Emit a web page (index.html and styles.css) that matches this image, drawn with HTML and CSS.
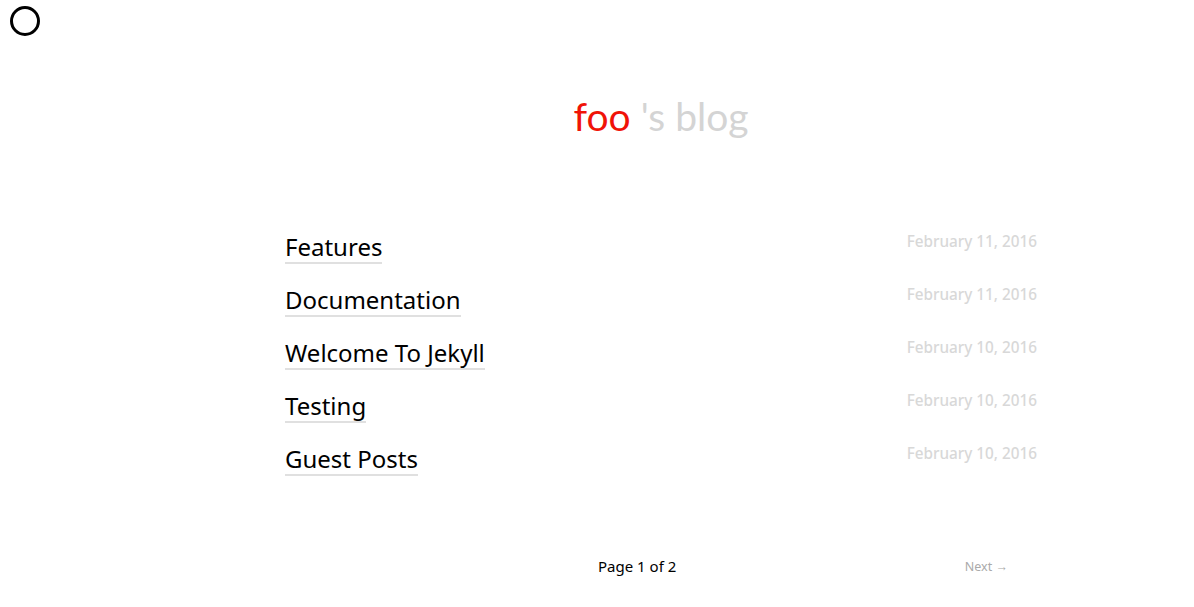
FILE: index.html
```html
<!DOCTYPE html>
<html lang="en">
<head>
  <meta charset="UTF-8">
  <meta name="viewport" content="width=device-width, initial-scale=1.0">
  <title>foo's blog</title>
  <link rel="stylesheet" href="styles.css">
</head>
<body>

  <header class="topbar">
    <a class="menu-toggle" href="#">
      <svg width="32" height="32" viewBox="0 0 32 32">
        <circle cx="16" cy="16" r="13.5" fill="none" stroke="#000" stroke-width="3"/>
      </svg>
    </a>
  </header>

  <main class="content">
    <h1 class="site-title"><span class="owner">foo</span> 's blog</h1>

    <ul class="post-list">
      <li class="post">
        <a class="post-link" href="#">Features</a>
        <span class="post-date">February 11, 2016</span>
      </li>
      <li class="post">
        <a class="post-link" href="#">Documentation</a>
        <span class="post-date">February 11, 2016</span>
      </li>
      <li class="post">
        <a class="post-link" href="#">Welcome To Jekyll</a>
        <span class="post-date">February 10, 2016</span>
      </li>
      <li class="post">
        <a class="post-link" href="#">Testing</a>
        <span class="post-date">February 10, 2016</span>
      </li>
      <li class="post">
        <a class="post-link" href="#">Guest Posts</a>
        <span class="post-date">February 10, 2016</span>
      </li>
    </ul>

    <nav class="pagination">
      <span class="page-number">Page 1 of 2</span>
      <a class="next" href="#">Next &rarr;</a>
    </nav>
  </main>

</body>
</html>
```

FILE: styles.css
```css
body {
  margin: 0;
  font-family: "Noto Sans", "Open Sans", sans-serif;
  background-color: #fff;
  color: #000;
}
a {
  text-decoration: none;
  color: inherit;
}
.topbar {
  height: 40px;
  padding: 5px 0 0 9px;
  box-sizing: border-box;
}
.menu-toggle {
  display: block;
  width: 32px;
  height: 32px;
}
.content {
  width: 752px;
  margin-left: 285px;
}
.site-title {
  margin: 52px 0 0;
  text-align: center;
  font-family: "Lato", "Noto Sans", sans-serif;
  font-weight: 400;
  font-size: 39px;
  line-height: 48px;
  color: #d4d4d4;
}
.owner {
  color: #f01308;
}
.post-list {
  list-style: none;
  margin: 91px 0 0;
  padding: 0;
}
.post {
  display: flex;
  justify-content: space-between;
  align-items: flex-start;
  height: 53px;
}
.post-link {
  font-size: 24px;
  line-height: 31px;
  border-bottom: 2px solid #e0e0e0;
}
.post-date {
  font-size: 15.3px;
  font-weight: 500;
  color: #d8d8d8;
  line-height: 21px;
}
.pagination {
  display: flex;
  align-items: center;
  margin-top: 60px;
  padding-right: 29px;
}
.page-number {
  font-size: 15px;
  margin-left: 313px;
}
.next {
  margin-left: auto;
  font-size: 12.5px;
  color: #aaa;
}
```
